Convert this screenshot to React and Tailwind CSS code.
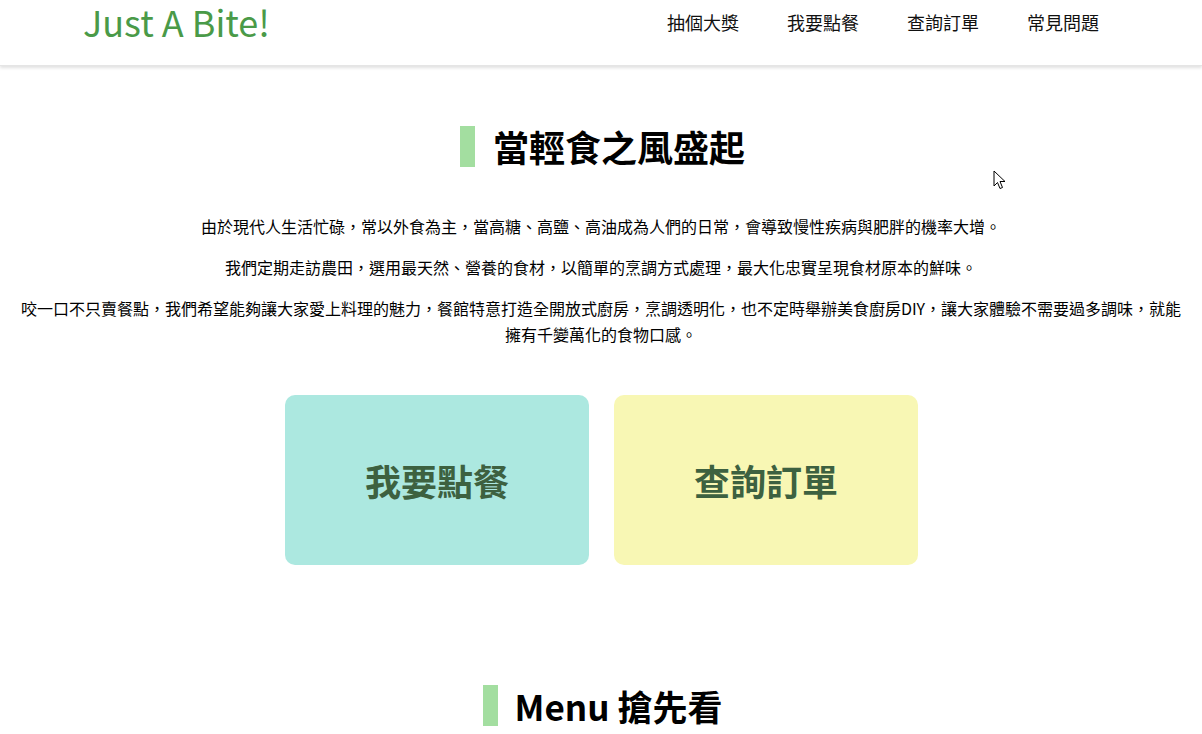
export default function App() {
  const font = { fontFamily: '"Noto Sans CJK TC", "Noto Sans", sans-serif' };
  return (
    <div className="relative min-h-[734px] bg-white text-black" style={font}>
      <header className="h-[66px] bg-white shadow-[0_2px_3px_rgba(0,0,0,0.12)] border-b border-[#e5e5e5] flex items-start justify-between pl-[83px] pr-[103px]">
        <div className="text-[36px] leading-[42px] text-[#4a9a48]">Just A Bite!</div>
        <nav className="flex gap-[48px] pt-[10px] text-[18px] leading-[24px] text-[#111]">
          <a>抽個大獎</a>
          <a>我要點餐</a>
          <a>查詢訂單</a>
          <a>常見問題</a>
        </nav>
      </header>

      <section className="px-[16px] pt-[60px] text-center">
        <div className="flex items-center justify-center gap-[18px] pl-[3px]">
          <div className="w-[15px] h-[41px] bg-[#a3dea0]" />
          <h2 className="text-[36px] font-bold leading-[41px]">當輕食之風盛起</h2>
        </div>
        <div className="mt-[46px] text-[16px] leading-[26px] flex flex-col gap-[15px]">
          <p>由於現代人生活忙碌，常以外食為主，當高糖、高鹽、高油成為人們的日常，會導致慢性疾病與肥胖的機率大增。</p>
          <p>我們定期走訪農田，選用最天然、營養的食材，以簡單的烹調方式處理，最大化忠實呈現食材原本的鮮味。</p>
          <p>咬一口不只賣餐點，我們希望能夠讓大家愛上料理的魅力，餐館特意打造全開放式廚房，烹調透明化，也不定時舉辦美食廚房DIY，讓大家體驗不需要過多調味，就能擁有千變萬化的食物口感。</p>
        </div>
        <div className="mt-[48px] flex justify-center gap-[25px] pl-[1px]">
          <a className="w-[304px] h-[170px] rounded-[10px] bg-[#ace8e0] flex items-center justify-center text-[36px] font-bold text-[#3d6140]">我要點餐</a>
          <a className="w-[304px] h-[170px] rounded-[10px] bg-[#f8f7b4] flex items-center justify-center text-[36px] font-bold text-[#3d6140]">查詢訂單</a>
        </div>
        <div className="mt-[120px] flex items-center justify-center gap-[17px] pl-[3px]">
          <div className="w-[15px] h-[41px] bg-[#a3dea0]" />
          <h2 className="text-[35px] font-bold leading-[41px]">Menu 搶先看</h2>
        </div>
      </section>

      <svg className="absolute left-[993px] top-[170px]" width="14" height="21" viewBox="0 0 14 21">
        <path d="M1 1 L1 16 L4.5 12.5 L7 18.5 L9.5 17.5 L7 11.5 L12 11.5 Z" fill="white" stroke="black" strokeWidth="1" strokeLinejoin="round" />
      </svg>
    </div>
  );
}
